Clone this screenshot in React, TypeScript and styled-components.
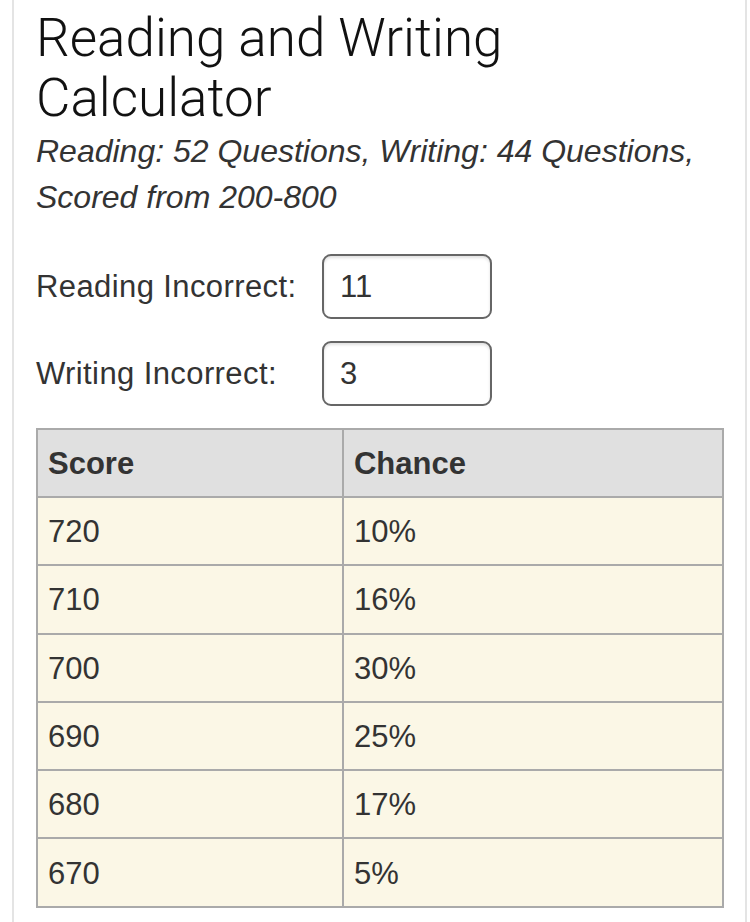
import React from "react";
import styled, { createGlobalStyle } from "styled-components";

const GlobalStyle = createGlobalStyle`
  html, body {
    margin: 0;
    padding: 0;
    background: #ffffff;
  }
  body {
    font-family: "Liberation Sans", Arial, Helvetica, sans-serif;
    color: #333333;
  }
`;

const Card = styled.div`
  box-sizing: border-box;
  width: 735px;
  margin-left: 12px;
  padding: 8px 21px 14px 22px;
  border-left: 2px solid #e4e4e4;
  border-right: 2px solid #e4e4e4;
`;

const Title = styled.h1`
  margin: 0;
  font-family: Roboto, "Liberation Sans", sans-serif;
  font-weight: 300;
  font-size: 53px;
  line-height: 60px;
  color: #111111;
`;

const Subtitle = styled.p`
  margin: 0;
  font-style: italic;
  font-size: 32px;
  line-height: 46px;
  color: #333333;
`;

const Form = styled.div`
  display: grid;
  grid-template-columns: 286px 170px;
  row-gap: 22px;
  align-items: center;
  margin-top: 34px;
`;

const Label = styled.label`
  font-size: 31px;
  letter-spacing: 0.4px;
  color: #333333;
`;

const Field = styled.input`
  box-sizing: border-box;
  width: 170px;
  height: 65px;
  padding: 0 16px;
  border: 2px solid #666666;
  border-radius: 9px;
  box-shadow: inset 0 2px 3px rgba(0, 0, 0, 0.12);
  font-family: "Liberation Sans", Arial, sans-serif;
  font-size: 31px;
  color: #333333;
  background: #ffffff;
  outline: none;
`;

const Table = styled.table`
  width: 100%;
  margin-top: 22px;
  border-collapse: collapse;
  border: 2px solid #aaaaaa;
  font-size: 31px;
`;

const HeadCell = styled.th`
  height: 64px;
  padding: 2px 0 0 10px;
  border: 2px solid #aaaaaa;
  background: #e0e0e0;
  text-align: left;
  font-weight: 700;
  color: #333333;
`;

const Cell = styled.td`
  height: 64.3px;
  padding: 2px 0 0 10px;
  border: 2px solid #aaaaaa;
  background: #fbf7e6;
  color: #333333;
`;

const rows = [
  { score: 720, chance: "10%" },
  { score: 710, chance: "16%" },
  { score: 700, chance: "30%" },
  { score: 690, chance: "25%" },
  { score: 680, chance: "17%" },
  { score: 670, chance: "5%" },
];

export default function App() {
  return (
    <>
      <GlobalStyle />
      <Card>
        <Title>Reading and Writing Calculator</Title>
        <Subtitle>Reading: 52 Questions, Writing: 44 Questions, Scored from 200-800</Subtitle>
        <Form>
          <Label htmlFor="reading">Reading Incorrect:</Label>
          <Field id="reading" defaultValue="11" />
          <Label htmlFor="writing">Writing Incorrect:</Label>
          <Field id="writing" defaultValue="3" />
        </Form>
        <Table>
          <thead>
            <tr>
              <HeadCell style={{ width: "44.6%" }}>Score</HeadCell>
              <HeadCell>Chance</HeadCell>
            </tr>
          </thead>
          <tbody>
            {rows.map((r) => (
              <tr key={r.score}>
                <Cell>{r.score}</Cell>
                <Cell>{r.chance}</Cell>
              </tr>
            ))}
          </tbody>
        </Table>
      </Card>
    </>
  );
}
